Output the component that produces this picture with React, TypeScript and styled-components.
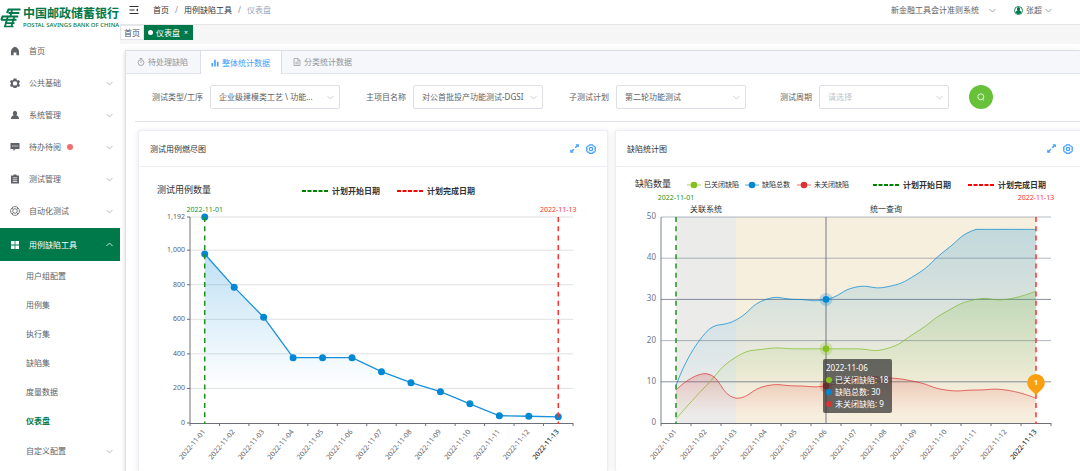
import React, { useState } from "react";
import styled, { createGlobalStyle, css } from "styled-components";

const GREEN = "#00794a";
const BLUE = "#409eff";

const GlobalStyle = createGlobalStyle`
  * { box-sizing: border-box; }
  body {
    margin: 0;
    background: #fff;
    color: #606266;
    font-family: "Noto Sans", "Noto Sans CJK SC", sans-serif;
    font-size: 8px;
    line-height: 12px;
    overflow: hidden;
  }
  button, select, input { font: inherit; color: inherit; }
  button { border: 0; background: none; padding: 0; cursor: pointer; }
  a { color: inherit; text-decoration: none; }
  svg { display: block; }
`;

/* ---------- shell ---------- */

const Shell = styled.div`
  display: flex;
  height: 100vh;
  overflow: hidden;
`;

const Sidebar = styled.aside`
  flex: 0 0 120px;
  background: #fff;
  overflow: hidden;
`;

const Brand = styled.a`
  display: flex;
  align-items: center;
  gap: 2px;
  height: 35px;
  color: ${GREEN};
  white-space: nowrap;
`;

const BrandText = styled.span`
  display: flex;
  flex-direction: column;
`;

const BrandName = styled.strong`
  font-size: 12px;
  line-height: 14px;
  font-weight: 700;
`;

const BrandSub = styled.span`
  font-size: 6px;
  line-height: 8px;
  font-weight: 500;
`;

const Menu = styled.nav`
  display: flex;
  flex-direction: column;
`;

const MenuRow = styled.button<{ $active?: boolean }>`
  display: flex;
  align-items: center;
  height: 32px;
  padding: 0 7px 0 10px;
  text-align: left;
  color: #606266;
  ${(p) =>
    p.$active &&
    css`
      height: 33px;
      margin-top: 1px;
      background: ${GREEN};
      color: #fff;
    `}
`;

const MenuIcon = styled.span`
  width: 19px;
`;

const MenuLabel = styled.span`
  flex: 1;
  display: flex;
  align-items: center;
  gap: 6px;
`;

const UnreadDot = styled.i`
  width: 6px;
  height: 6px;
  border-radius: 50%;
  background: #f56c6c;
`;

const SubLink = styled.a<{ $current?: boolean }>`
  height: 29px;
  padding-left: 26px;
  line-height: 29px;
  color: ${(p) => (p.$current ? GREEN : "#606266")};
  font-weight: ${(p) => (p.$current ? 700 : 400)};
`;

const SubGroup = styled(MenuRow)`
  padding-left: 26px;
`;

const Main = styled.main`
  flex: 1;
  min-width: 0;
  display: flex;
  flex-direction: column;
`;

const TopBar = styled.header`
  flex: none;
  display: flex;
  align-items: center;
  height: 25px;
  padding: 0 28px 4px 9px;
  border-bottom: 1px solid #e6e6e6;
`;

const Crumbs = styled.nav`
  display: flex;
  align-items: center;
  gap: 6px;
  margin-left: 14px;
  color: #303133;
`;

const CrumbSep = styled.span`
  color: #909399;
`;

const CrumbCurrent = styled.span`
  color: #97a8be;
`;

const TopRight = styled.div`
  display: flex;
  align-items: center;
  margin-left: auto;
  gap: 18px;
`;

const TopMenu = styled.button<{ $gap: number }>`
  display: flex;
  align-items: center;
  gap: ${(p) => p.$gap}px;
`;

const TagBar = styled.div`
  flex: none;
  display: flex;
  height: 19px;
  background: #f6f6f6;
`;

const Tag = styled.button<{ $active?: boolean }>`
  display: flex;
  align-items: center;
  justify-content: center;
  gap: 3px;
  height: 15px;
  padding: 0 3px;
  border: 1px solid ${(p) => (p.$active ? GREEN : "#e4e6ec")};
  background: ${(p) => (p.$active ? GREEN : "#fff")};
  color: ${(p) => (p.$active ? "#fff" : "#495060")};
`;

const TagDot = styled.i`
  width: 5px;
  height: 5px;
  border-radius: 50%;
  background: #fff;
`;

const TagClose = styled.span`
  width: 6px;
  font-size: 7px;
  text-align: center;
`;

/* ---------- page ---------- */

const Page = styled.section`
  flex: 1;
  margin: 6px 0 0 5px;
  border: 1px solid #dcdfe6;
  border-right: 0;
  background: #fff;
  box-shadow: 0 2px 4px rgba(0, 0, 0, 0.12), 0 0 6px rgba(0, 0, 0, 0.04);
`;

const TabStrip = styled.div`
  display: flex;
  height: 23px;
  background: #f5f7fa;
  border-bottom: 1px solid #e4e7ed;
`;

const Tab = styled.button<{ $active?: boolean }>`
  display: flex;
  align-items: center;
  gap: 3px;
  padding: 0 11px 0 10px;
  border: solid transparent;
  border-width: 0 1px;
  color: #909399;
  ${(p) =>
    p.$active &&
    css`
      margin-bottom: -1px;
      background: #fff;
      border-color: #dcdfe6;
      color: ${BLUE};
    `}
`;

const Filters = styled.form`
  display: flex;
  align-items: center;
  margin-left: 9px;
  padding: 11px 0 12px 2px;
  border-bottom: 1px solid #dcdfe6;
`;

const Field = styled.div`
  display: flex;
  align-items: center;
`;

const FieldLabel = styled.label`
  width: 66px;
  margin-right: 7px;
  text-align: right;
`;

const SelectWrap = styled.span`
  display: grid;
  align-items: center;
  > * { grid-area: 1 / 1; }
  > svg { justify-self: end; margin-right: 6px; pointer-events: none; }
`;

const Select = styled.select<{ $empty?: boolean }>`
  appearance: none;
  width: 130px;
  height: 24px;
  padding: 0 17px 0 8px;
  border: 1px solid #dcdfe6;
  border-radius: 2px;
  background: #fff;
  color: ${(p) => (p.$empty ? "#c0c4cc" : "#606266")};
  outline: none;
`;

const SearchButton = styled.button`
  display: grid;
  place-items: center;
  width: 24px;
  height: 24px;
  margin-left: 20px;
  border-radius: 50%;
  background: #67c23a;
`;

const Cards = styled.div`
  display: grid;
  grid-template-columns: 1fr 1fr;
  gap: 7px;
  margin: 8px -5px 0 12px;
`;

const Card = styled.article`
  border: 1px solid #ebeef5;
  border-radius: 2px;
  background: #fff;
  box-shadow: 0 1px 6px rgba(0, 0, 0, 0.1);
`;

const CardHead = styled.header`
  display: flex;
  align-items: center;
  gap: 7px;
  height: 36px;
  padding: 0 11px;
  border-bottom: 1px solid #ebeef5;
`;

const CardTitle = styled.h2`
  flex: 1;
  margin: 0;
  font-size: 8px;
  font-weight: 400;
  color: #303133;
`;

const ChartSvg = styled.svg`
  width: 100%;
  height: auto;
  overflow: visible;
  text { font-family: "Noto Sans", "Noto Sans CJK SC", sans-serif; }
`;

/* ---------- icons ---------- */

const Chevron = ({ up, color = "#a8abb2" }: { up?: boolean; color?: string }) => (
  <svg width="7" height="5" viewBox="0 0 7 5" fill="none" stroke={color} strokeWidth="0.8">
    <path d={up ? "M0.5 4 3.5 1 6.5 4" : "M0.5 1 3.5 4 6.5 1"} />
  </svg>
);

const iconShapes: Record<string, React.ReactNode> = {
  home: <path d="M5 0.8C2.4 1.7 1 3.4 1 5.4V9.2h2.6V6.4h2.8v2.8H9V5.4C9 3.4 7.6 1.7 5 0.8z" />,
  gear: (
    <path
      fillRule="evenodd"
      d="M3.6 0.6h2.8l.4 1.3.9.5 1.3-.3 1 2-1 .9v1l1 .9-1 2-1.3-.3-.9.5-.4 1.2H3.6l-.4-1.2-.9-.5-1.3.3-1-2 1-.9V5L0 4.1l1-2 1.3.3.9-.5zM5 3.2a2.2 2.2 0 1 0 0 4.4 2.2 2.2 0 0 0 0-4.4z"
    />
  ),
  user: <path d="M5 0.8a2.3 2.5 0 0 1 1.3 4.4C8 5.7 9 6.7 9 9H1c0-2.3 1-3.3 2.7-3.8A2.3 2.5 0 0 1 5 .8z" />,
  chat: (
    <path
      fillRule="evenodd"
      d="M0.5 1h9v6H5.5L3.5 9V7h-3zM2.300 3.500v1h1.200v-1zm2.100 0v1h1.200v-1zm2.100 0v1h1.200v-1z"
    />
  ),
  clipboard: (
    <path
      fillRule="evenodd"
      d="M3.5 0.5h3v1H9v8H1v-8h2.5zM2.8 3.5v.8h4.4v-.8zm0 1.9v.8h4.4v-.8zm0 1.9v.8h4.4v-.8z"
    />
  ),
  ring: (
    <g fill="none" stroke="currentColor" strokeWidth="0.8">
      <circle cx="5" cy="5" r="4.4" />
      <circle cx="5" cy="5" r="2.3" />
      <path d="M2 2l1.3 1.3M8 2 6.7 3.3M2 8l1.3-1.3M8 8 6.7 6.7" />
    </g>
  ),
  grid: <path d="M1 1h3.6v3.6H1zM5.4 1H9v3.6H5.4zM1 5.4h3.6V9H1zM5.4 5.4H9V9H5.4z" />,
};

const SideIcon = ({ name }: { name: string }) => (
  <svg width="10" height="10" viewBox="0 0 10 10" fill="currentColor">
    {iconShapes[name]}
  </svg>
);

const LogoMark = () => (
  <svg width="21" height="20" viewBox="0 0 21 20" fill="none" stroke={GREEN} strokeWidth="2">
    <path d="M20.5 1.500H8.500L7 5" />
    <path d="M19.300 5H8.500" />
    <path d="M18.200 8.400H2.500L1.300 12" />
    <path d="M16.500 11.800H1.200" />
    <path d="M14.500 15.200H5M13.500 18.500H4" strokeWidth="1.700" />
    <path d="M12 2 10.500 8M8 8 4.800 19M14.500 8 11.500 18" strokeWidth="1.800" />
  </svg>
);

const FoldIcon = () => (
  <svg width="10" height="10" viewBox="0 0 10 10" fill="none" stroke="#303133">
    <path d="M0.5 1.5h9M0.5 5h5M0.5 8.5h9" />
    <path d="M9 3.5 7 5l2 1.5z" fill="#303133" stroke="none" />
  </svg>
);

const AvatarIcon = () => (
  <svg width="9" height="9" viewBox="0 0 9 9">
    <circle cx="4.5" cy="4.5" r="4" fill="#fff" stroke={GREEN} strokeWidth="0.9" />
    <path d="M4.500 1a1.700 2 0 0 1 1 3.500c1 .3 1.600.9 1.700 2.200-1.400 1.600-4 1.600-5.400 0 .1-1.300.7-1.900 1.700-2.200a1.700 2 0 0 1 1-3.500z" fill={GREEN} />
  </svg>
);

const TimerIcon = () => (
  <svg width="8" height="8" viewBox="0 0 8 8" fill="none" stroke="currentColor" strokeWidth="0.8">
    <circle cx="4" cy="4.6" r="2.9" />
    <path d="M2.7 0.5h2.6M4 3v1.8" />
  </svg>
);

const BarsIcon = () => (
  <svg width="8" height="8" viewBox="0 0 8 8" fill="currentColor">
    <path d="M0.5 4h1.6v3.6H.5zM3.2 0.8h1.6v6.8H3.2zM5.9 2.8h1.6v4.8H5.9z" />
  </svg>
);

const DocIcon = () => (
  <svg width="8" height="8" viewBox="0 0 8 8" fill="none" stroke="currentColor" strokeWidth="0.7">
    <path d="M1 0.5h4L7 2.5v5H1zM4.8 0.5v2.2H7M2.3 4.2h3.4M2.3 5.8h3.4" />
  </svg>
);

const SearchIcon = () => (
  <svg width="8" height="8" viewBox="0 0 8 8" fill="none" stroke="#fff" strokeWidth="0.8">
    <circle cx="3.8" cy="3.8" r="3" />
    <path d="M5.6 6 7 7.4" />
  </svg>
);

const ExpandIcon = () => (
  <svg width="9" height="9" viewBox="0 0 9 9" fill={BLUE}>
    <path d="M5.4 0.200H8.800v3.400L7.700 2.500 5.700 4.300 4.700 3.400 6.500 1.300zM0.200 5.400 1.300 6.500 3.300 4.700l1 .9-1.800 2.100 1.100 1.100H.2z" />
  </svg>
);

const SettingIcon = () => (
  <svg width="10" height="10" viewBox="0 0 10 10" fill="none" stroke={BLUE} strokeWidth="1.2">
    <path d="M3.5 0.8h3l.7 1.2 1.4.2 1 2L8.8 5l.8.9-1 2-1.4.2-.7 1.2h-3l-.7-1.2-1.4-.2-1-2L1.200 5 .4 4.2l1-2 1.4-.2z" />
    <circle cx="5" cy="5" r="1.7" />
  </svg>
);

/* ---------- charts ---------- */

type Point = [number, number];

const DAYS = Array.from({ length: 13 }, (_, i) => `2022-11-${String(i + 1).padStart(2, "0")}`);
const TOP = 50;
const BOTTOM = 256;

const polyline = (pts: Point[]) => pts.map((p) => p.join(" ")).join(" L");

/* Cubic spline whose control points stay inside the value range of the series. */
function smoothPath(pts: Point[]) {
  const ys = pts.map((p) => p[1]);
  const lo = Math.min(...ys);
  const hi = Math.max(...ys);
  const clamp = (y: number) => Math.min(hi, Math.max(lo, y));
  const dist = (a: Point, b: Point) => Math.hypot(a[0] - b[0], a[1] - b[1]);
  let out = `M${pts[0].join(" ")}`;
  let lead: Point = pts[0];
  for (let i = 1; i < pts.length; i++) {
    const p = pts[i];
    let enter: Point = p;
    let leave: Point = p;
    if (i < pts.length - 1) {
      const prev = pts[i - 1];
      const next = pts[i + 1];
      const before = dist(p, prev);
      const after = dist(p, next);
      const ratio = after / (before + after);
      const vx = (next[0] - prev[0]) / 2;
      const vy = (next[1] - prev[1]) / 2;
      enter = [p[0] - vx * (1 - ratio), clamp(p[1] - vy * (1 - ratio))];
      leave = [p[0] + vx * ratio, clamp(p[1] + vy * ratio)];
    }
    out += ` C${lead.join(" ")} ${enter.join(" ")} ${p.join(" ")}`;
    lead = leave;
  }
  return out;
}

const DateLabels = ({ left, step }: { left: number; step: number }) => (
  <g fontSize="7" textAnchor="end">
    {DAYS.map((d, i) => {
      const x = left + step * (i + 0.5);
      const last = i === DAYS.length - 1;
      return (
        <text
          key={d}
          transform={`translate(${x + 1} 265) rotate(-50)`}
          fill={last ? "#303133" : "#606266"}
          fontWeight={last ? 500 : 400}
        >
          {d}
        </text>
      );
    })}
  </g>
);

const XAxis = ({ left, right, step }: { left: number; right: number; step: number }) => (
  <g stroke="#6e7079" strokeWidth="1">
    <path d={`M${left} ${BOTTOM + 0.5}H${right}`} />
    {Array.from({ length: 14 }, (_, i) => (
      <path key={i} d={`M${left + step * i} ${BOTTOM}v3`} />
    ))}
  </g>
);

const DashLegend = ({ x, y, color, label }: { x: number; y: number; color: string; label: string }) => (
  <g>
    <path d={`M${x} ${y}h26`} stroke={color} strokeWidth="2" strokeDasharray="4 1.5" />
    <text x={x + 30} y={y + 3} fontSize="8" fontWeight="700" fill="#303133">
      {label}
    </text>
  </g>
);

const DateLine = ({ x, color, label, labelY }: { x: number; color: string; label: string; labelY: number }) => (
  <g>
    <path d={`M${x} ${TOP}V${BOTTOM + 1}`} stroke={color} strokeWidth="1.5" strokeDasharray="5 4.3" />
    <text x={x} y={labelY} fontSize="7" fill={color} textAnchor="middle">
      {label}
    </text>
  </g>
);

function BurndownChart() {
  const left = 51;
  const right = 434;
  const step = (right - left) / 13;
  const max = 1192;
  const y = (v: number) => BOTTOM - (v / max) * (BOTTOM - TOP);
  const values = [978, 786, 612, 378, 378, 378, 297, 233, 181, 111, 42, 39, 36];
  const pts = values.map((v, i): Point => [left + step * (i + 0.5), y(v)]);
  const line = `M${polyline(pts)}`;
  return (
    <ChartSvg viewBox="0 0 468 304" role="img" aria-label="测试用例燃尽图">
      <defs>
        <linearGradient id="burn" x1="0" y1="0" x2="0" y2="1">
          <stop offset="0" stopColor="#0088d4" stopOpacity="0.25" />
          <stop offset="0.8" stopColor="#0088d4" stopOpacity="0" />
        </linearGradient>
      </defs>
      <text x="18" y="26" fontSize="9" fill="#303133">测试用例数量</text>
      <DashLegend x={163} y={24} color="#008000" label="计划开始日期" />
      <DashLegend x={258} y={24} color="#ff0000" label="计划完成日期" />
      {[0, 200, 400, 600, 800, 1000, 1192].map((v) => (
        <g key={v}>
          {v > 0 && <path d={`M${left} ${y(v)}H${right}`} stroke="#e0e0e0" />}
          <path d={`M${left - 3} ${y(v)}h3`} stroke="#6e7079" />
          <text x={left - 5} y={y(v) + 2} fontSize="7" fill="#606266" textAnchor="end">
            {v.toLocaleString("en-US")}
          </text>
        </g>
      ))}
      <path d={`M${left} ${TOP}V${BOTTOM}`} stroke="#6e7079" />
      <XAxis left={left} right={right} step={step} />
      <DateLabels left={left} step={step} />
      <path d={`${line} V${BOTTOM} H${pts[0][0]}Z`} fill="url(#burn)" />
      <path d={line} fill="none" stroke="#1890dc" strokeWidth="1.3" />
      {[[pts[0][0], TOP] as Point, ...pts].map((p, i) => (
        <circle key={i} cx={p[0]} cy={p[1]} r="3.5" fill="#0088d4" />
      ))}
      <DateLine x={pts[0][0]} color="#1c921c" label={DAYS[0]} labelY={45} />
      <DateLine x={pts[12][0]} color="#ff3030" label={DAYS[12]} labelY={45} />
    </ChartSvg>
  );
}

const SERIES = [
  { id: "closed", name: "已关闭缺陷", color: "#84bf1b", legendX: 71, values: [1, 9, 16, 18, 18, 18, 18, 18, 22, 27, 30, 30, 32] },
  { id: "total", name: "缺陷总数", color: "#0088d4", legendX: 129, values: [9, 22, 25, 30, 30, 30, 33, 33, 36, 42, 47, 47, 47] },
  { id: "open", name: "未关闭缺陷", color: "#db3232", legendX: 181, values: [8, 12, 6, 9, 9, 9, 11, 11, 10, 8, 8, 8, 6] },
];

function DefectChart() {
  const left = 45;
  const right = 435;
  const step = (right - left) / 13;
  const y = (v: number) => BOTTOM - (v / 50) * (BOTTOM - TOP);
  const x = (i: number) => left + step * (i + 0.5);
  const focus = 5;
  return (
    <ChartSvg viewBox="0 0 468 304" role="img" aria-label="缺陷统计图">
      <defs>
        {SERIES.map((s) => (
          <linearGradient key={s.id} id={s.id} x1="0" y1="0" x2="0" y2="1">
            <stop offset="0" stopColor={s.color} stopOpacity="0.22" />
            <stop offset="0.85" stopColor={s.color} stopOpacity="0" />
          </linearGradient>
        ))}
      </defs>
      <text x="19" y="20" fontSize="9" fill="#303133">缺陷数量</text>
      {SERIES.map((s) => (
        <g key={s.id}>
          <path d={`M${s.legendX} 18h14`} stroke={s.color} strokeOpacity="0.7" />
          <circle cx={s.legendX + 7} cy="18" r="3.3" fill={s.color} />
          <text x={s.legendX + 17} y="20" fontSize="7" fill="#303133">{s.name}</text>
        </g>
      ))}
      <DashLegend x={257} y={18} color="#008000" label="计划开始日期" />
      <DashLegend x={352} y={18} color="#ff0000" label="计划完成日期" />
      <rect x={x(0)} y={TOP} width={step * 2} height={BOTTOM - TOP} fill="#ebece9" />
      <rect x={x(2)} y={TOP} width={step * 10} height={BOTTOM - TOP} fill="#f7efde" />
      <g fontSize="8" fill="#303133" textAnchor="middle">
        <text x={x(1)} y="45">关联系统</text>
        <text x={x(7)} y="45">统一查询</text>
      </g>
      {[0, 10, 20, 30, 40, 50].map((v) => (
        <g key={v}>
          {v > 0 && <path d={`M${left} ${y(v)}H${right}`} stroke="#57617b" strokeOpacity={v % 20 === 10 && v < 50 ? 0.7 : 0.45} />}
          <text x={left - 5} y={y(v) + 2} fontSize="8" fill="#6e7390" textAnchor="end">{v}</text>
        </g>
      ))}
      <path d={`M${left} ${TOP}V${BOTTOM}`} stroke="#57617b" strokeOpacity="0.8" />
      <XAxis left={left} right={right} step={step} />
      <DateLabels left={left} step={step} />
      {SERIES.map((s) => {
        const line = smoothPath(s.values.map((v, i): Point => [x(i), y(v)]));
        return (
          <g key={s.id}>
            <path d={`${line} V${BOTTOM} H${x(0)}Z`} fill={`url(#${s.id})`} />
            <path d={line} fill="none" stroke={s.color} strokeOpacity="0.7" />
          </g>
        );
      })}
      <path d={`M${x(focus)} ${TOP}V${BOTTOM}`} stroke="#57606f" strokeOpacity="0.8" />
      {SERIES.map((s) => (
        <g key={s.id} fill={s.color}>
          <circle cx={x(focus)} cy={y(s.values[focus])} r="6.5" fillOpacity="0.25" />
          <circle cx={x(focus)} cy={y(s.values[focus])} r="3.3" />
        </g>
      ))}
      <DateLine x={x(0)} color="#1c921c" label={DAYS[0]} labelY={33} />
      <DateLine x={x(12)} color="#ff3030" label={DAYS[12]} labelY={33} />
      <path
        transform={`translate(${x(12)} 229)`}
        d="M0 0C-1.5-4.5-8.8-6.5-8.8-13.2A8.8 8.8 0 0 1 8.8-13.2C8.8-6.5 1.5-4.5 0 0z"
        fill="#f99f10"
      />
      <text x={x(12)} y="218" fontSize="7" fontWeight="700" fill="#fff" textAnchor="middle">1</text>
      <g transform={`translate(${x(focus) - 3} 192)`} fontSize="8" fill="#fff">
        <rect width="69" height="54" rx="2" fill="#323232" fillOpacity="0.72" />
        <text x="3" y="12">{DAYS[focus]}</text>
        {SERIES.map((s, i) => (
          <g key={s.id}>
            <circle cx="6" cy={21 + 12 * i} r="3" fill={s.color} />
            <text x="12" y={24 + 12 * i}>{`${s.name}: ${s.values[focus]}`}</text>
          </g>
        ))}
      </g>
    </ChartSvg>
  );
}

/* ---------- page data ---------- */

const MENU = [
  { icon: "home", label: "首页" },
  { icon: "gear", label: "公共基础", group: true },
  { icon: "user", label: "系统管理", group: true },
  { icon: "chat", label: "待办待阅", group: true, unread: true },
  { icon: "clipboard", label: "测试管理", group: true },
  { icon: "ring", label: "自动化测试", group: true },
];

const SUB_MENU = ["用户组配置", "用例集", "执行集", "缺陷集", "度量数据", "仪表盘"];

const TABS = [
  { label: "待处理缺陷", Icon: TimerIcon },
  { label: "整体统计数据", Icon: BarsIcon },
  { label: "分类统计数据", Icon: DocIcon },
];

const FIELDS = [
  { id: "type", label: "测试类型/工序", value: "企业级建模类工艺 \\ 功能..." },
  { id: "project", label: "主项目名称", value: "对公首批投产功能测试-DGSI" },
  { id: "plan", label: "子测试计划", value: "第二轮功能测试" },
  { id: "cycle", label: "测试周期", value: "请选择", empty: true },
];

const ChartCard = ({ title, children }: { title: string; children: React.ReactNode }) => (
  <Card>
    <CardHead>
      <CardTitle>{title}</CardTitle>
      <button type="button" aria-label="全屏"><ExpandIcon /></button>
      <button type="button" aria-label="设置"><SettingIcon /></button>
    </CardHead>
    {children}
  </Card>
);

export default function App() {
  const [tab, setTab] = useState(1);
  return (
    <Shell>
      <GlobalStyle />
      <Sidebar>
        <Brand href="#">
          <LogoMark />
          <BrandText>
            <BrandName>中国邮政储蓄银行</BrandName>
            <BrandSub>POSTAL SAVINGS BANK OF CHINA</BrandSub>
          </BrandText>
        </Brand>
        <Menu>
          {MENU.map((m) => (
            <MenuRow key={m.label} type="button">
              <MenuIcon><SideIcon name={m.icon} /></MenuIcon>
              <MenuLabel>{m.label}{m.unread && <UnreadDot />}</MenuLabel>
              {m.group && <Chevron />}
            </MenuRow>
          ))}
          <MenuRow type="button" $active>
            <MenuIcon><SideIcon name="grid" /></MenuIcon>
            <MenuLabel>用例缺陷工具</MenuLabel>
            <Chevron up color="#fff" />
          </MenuRow>
          {SUB_MENU.map((s) => (
            <SubLink key={s} href="#" $current={s === "仪表盘"}>{s}</SubLink>
          ))}
          <SubGroup type="button">
            <MenuLabel>自定义配置</MenuLabel>
            <Chevron />
          </SubGroup>
        </Menu>
      </Sidebar>
      <Main>
        <TopBar>
          <button type="button" aria-label="收起菜单"><FoldIcon /></button>
          <Crumbs>
            <a href="#">首页</a>
            <CrumbSep>/</CrumbSep>
            <a href="#">用例缺陷工具</a>
            <CrumbSep>/</CrumbSep>
            <CrumbCurrent>仪表盘</CrumbCurrent>
          </Crumbs>
          <TopRight>
            <TopMenu type="button" $gap={10}>
              新金融工具会计准则系统
              <Chevron color="#8a8d93" />
            </TopMenu>
            <TopMenu type="button" $gap={3}>
              <AvatarIcon />
              张超
              <Chevron color="#8a8d93" />
            </TopMenu>
          </TopRight>
        </TopBar>
        <TagBar>
          <Tag type="button">首页</Tag>
          <Tag type="button" $active>
            <TagDot />
            仪表盘
            <TagClose>×</TagClose>
          </Tag>
        </TagBar>
        <Page>
          <TabStrip role="tablist">
            {TABS.map(({ label, Icon }, i) => (
              <Tab key={label} type="button" role="tab" aria-selected={i === tab} $active={i === tab} onClick={() => setTab(i)}>
                <Icon />
                {label}
              </Tab>
            ))}
          </TabStrip>
          <Filters onSubmit={(e) => e.preventDefault()}>
            {FIELDS.map((f) => (
              <Field key={f.id}>
                <FieldLabel htmlFor={f.id}>{f.label}</FieldLabel>
                <SelectWrap>
                  <Select id={f.id} $empty={f.empty}>
                    <option>{f.value}</option>
                  </Select>
                  <Chevron color="#c0c4cc" />
                </SelectWrap>
              </Field>
            ))}
            <SearchButton aria-label="查询"><SearchIcon /></SearchButton>
          </Filters>
          <Cards>
            <ChartCard title="测试用例燃尽图"><BurndownChart /></ChartCard>
            <ChartCard title="缺陷统计图"><DefectChart /></ChartCard>
          </Cards>
        </Page>
      </Main>
    </Shell>
  );
}
